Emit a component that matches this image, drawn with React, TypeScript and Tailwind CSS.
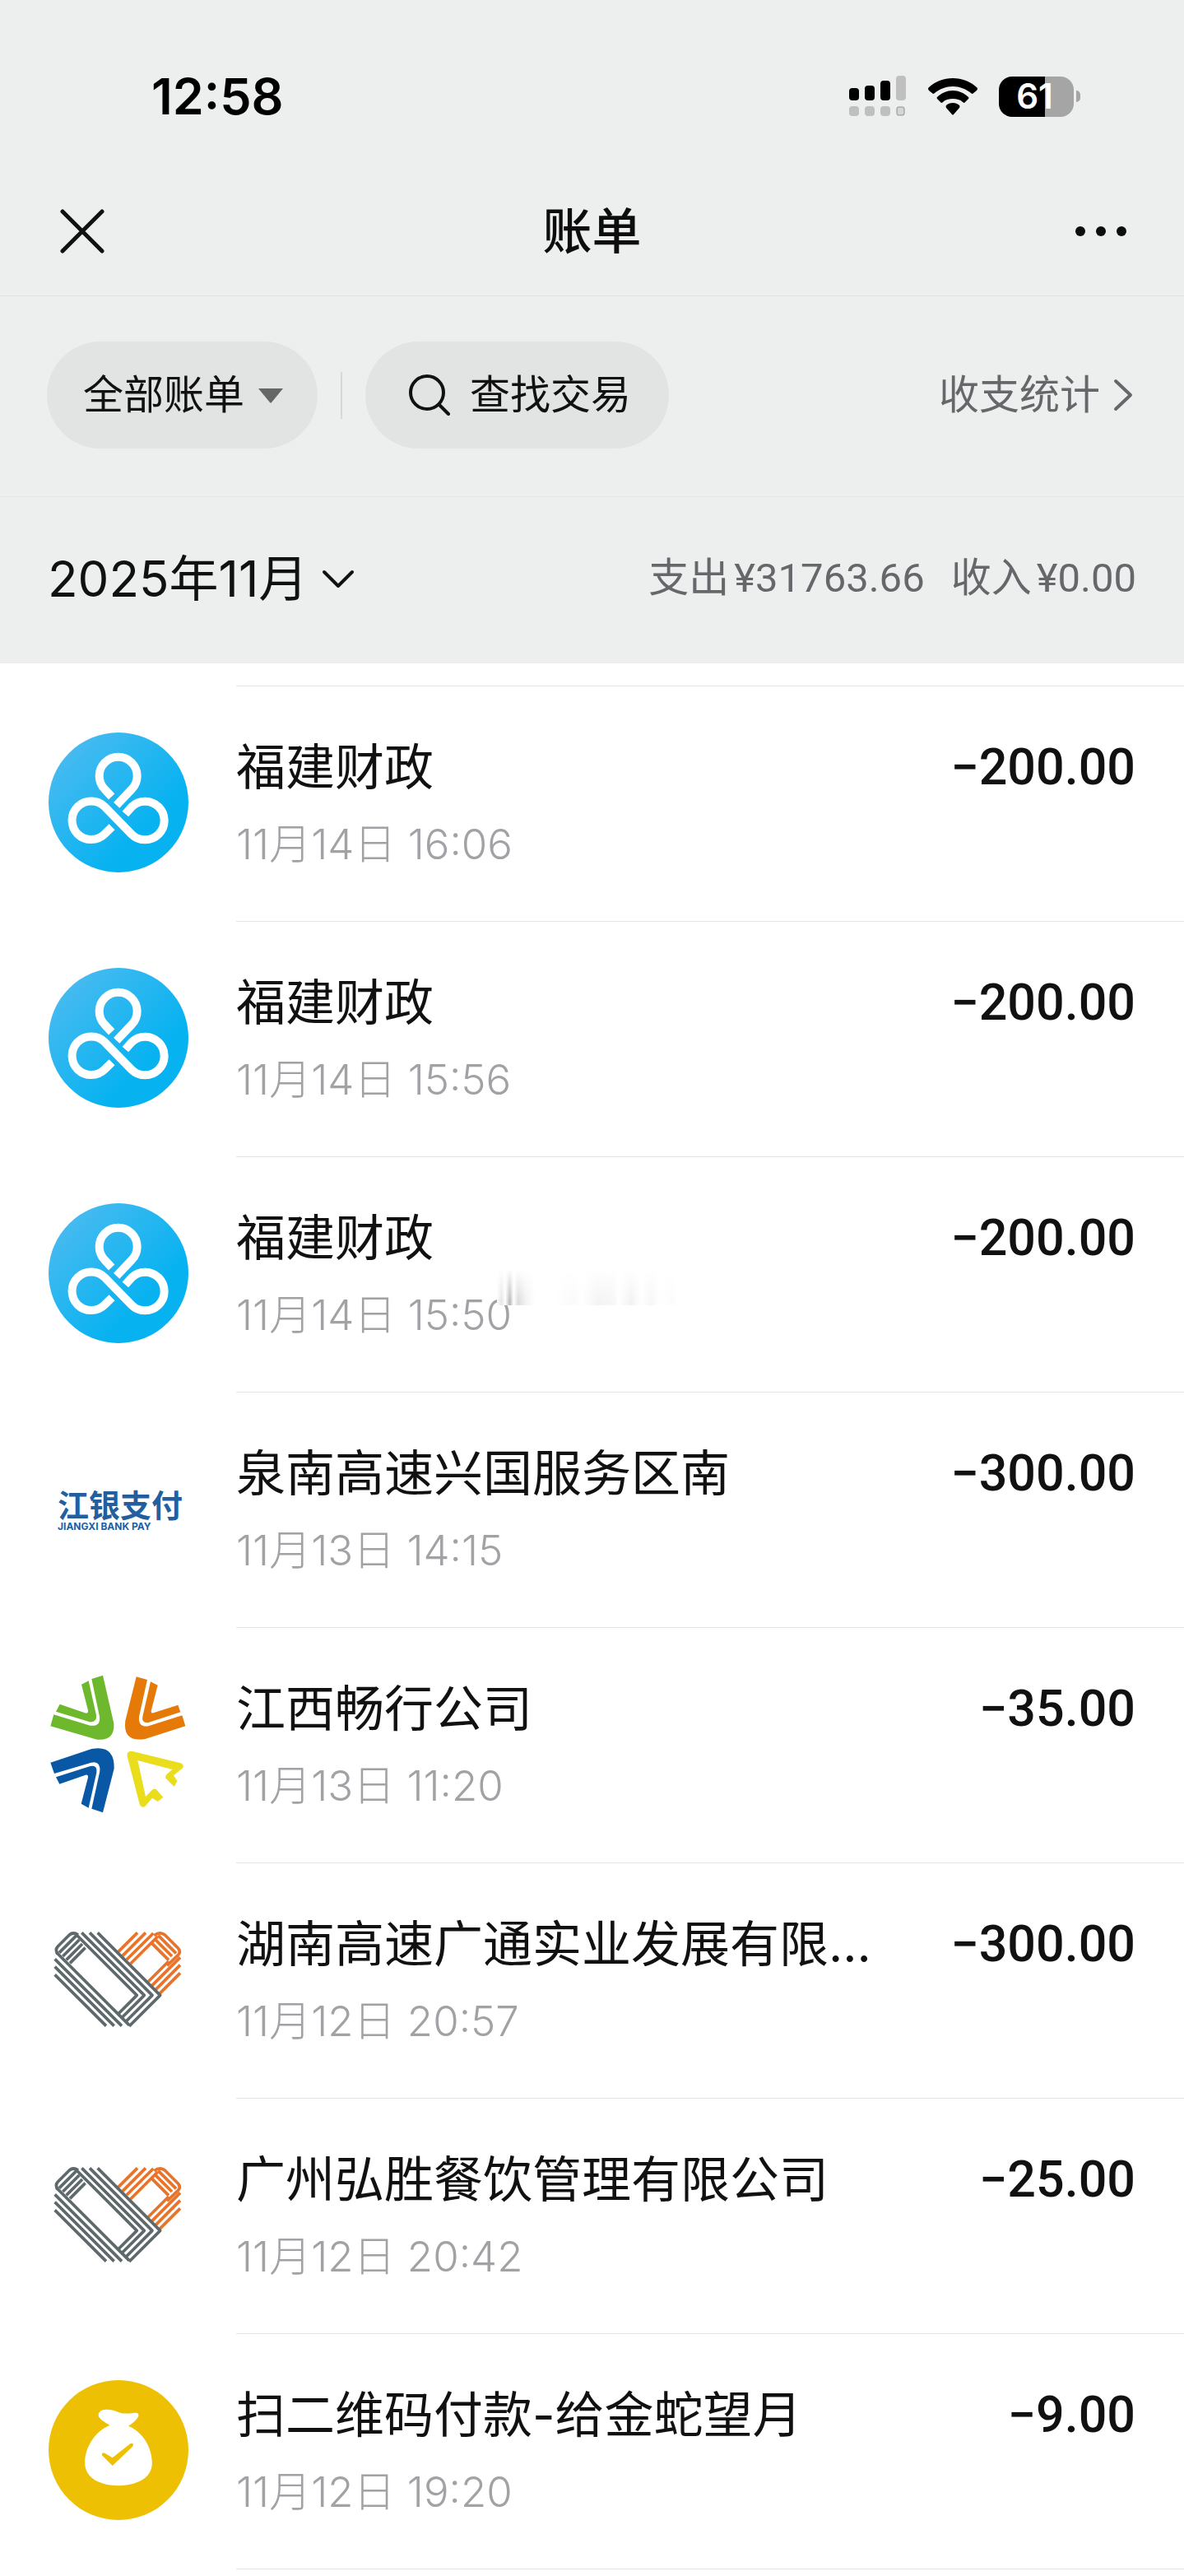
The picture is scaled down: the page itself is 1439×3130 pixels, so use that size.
import { useState } from "react";

type LogoKind = "fujian" | "jiangxi" | "changxing" | "heart" | "bag";

interface Bill {
  id: number;
  logo: LogoKind;
  title: string;
  time: string;
  amount: string;
  smudged?: boolean;
}

const bills: Bill[] = [
  { id: 1, logo: "fujian", title: "福建财政", time: "11月14日 16:06", amount: "−200.00" },
  { id: 2, logo: "fujian", title: "福建财政", time: "11月14日 15:56", amount: "−200.00" },
  { id: 3, logo: "fujian", title: "福建财政", time: "11月14日 15:50", amount: "−200.00", smudged: true },
  { id: 4, logo: "jiangxi", title: "泉南高速兴国服务区南", time: "11月13日 14:15", amount: "−300.00" },
  { id: 5, logo: "changxing", title: "江西畅行公司", time: "11月13日 11:20", amount: "−35.00" },
  { id: 6, logo: "heart", title: "湖南高速广通实业发展有限...", time: "11月12日 20:57", amount: "−300.00" },
  { id: 7, logo: "heart", title: "广州弘胜餐饮管理有限公司", time: "11月12日 20:42", amount: "−25.00" },
  { id: 8, logo: "bag", title: "扫二维码付款-给金蛇望月", time: "11月12日 19:20", amount: "−9.00" },
];

function FujianLogo() {
  return (
    <svg className="size-full" viewBox="58 60 510 510" fill="none">
      <defs>
        <linearGradient id="fujian-bg" x1="0" y1="0" x2="1" y2="1">
          <stop offset="0.1" stopColor="#4abbf0" />
          <stop offset="0.7" stopColor="#06b2f0" />
        </linearGradient>
      </defs>
      <circle cx="313" cy="315" r="255" fill="url(#fujian-bg)" />
      <g stroke="#fff" strokeWidth="30">
        <path d="M289 404L263 430A70 70 0 1 1 263 331L361 431A70 70 0 1 0 361 331L338 357" />
        <path d="M288 294L263 267A69 69 0 1 1 361 267L306 325" />
      </g>
    </svg>
  );
}

function JiangxiLogo() {
  return (
    <div className="flex size-full flex-col items-start justify-center pt-1 pl-[11px] text-[#235f9f]">
      <span className="text-[38px] leading-[40px] font-bold whitespace-nowrap">江银支付</span>
      <span className="text-[12px] leading-[12px] font-bold whitespace-nowrap">JIANGXI BANK PAY</span>
    </div>
  );
}

function ChangxingLogo() {
  return (
    <svg className="size-full" viewBox="58 45 510 510">
      <g fill="#6db82c">
        <path d="M77 193L210 233Q248 238 244 200L215 63L256 50L296 225Q300 290 235 284L65 235Z" />
        <path d="M99 155L195 188Q204 188 202 178L178 83L204 70L232 195Q235 222 208 220L85 182Z" />
      </g>
      <g fill="#e67a08">
        <path d="M378 55L418 66L388 200Q384 240 422 235L545 196L557 235L410 282Q328 295 338 215Z" />
        <path d="M430 73L456 86L432 180Q432 190 440 187L530 158L539 184L422 222Q396 224 401 200Z" />
      </g>
      <g fill="#0958a6">
        <path d="M65 368L215 318Q300 302 297 390L256 550L215 536L245 400Q248 360 213 368L79 408Z" />
        <path d="M85 421L210 381Q237 376 233 404L204 533L177 518L202 422Q203 411 193 413L98 446Z" />
      </g>
      <path
        fill="#e9dd1c"
        d="M362 326L540 370Q554 376 547 388L514 415L527 435L516 456L484 424Q483 418 488 412L509 393L383 360L412 492L436 467Q442 462 450 465L476 494L456 510L436 497L410 528Q397 535 390 520L345 345Q342 325 362 326Z"
      />
    </svg>
  );
}

function HeartLogo() {
  return (
    <svg className="size-full" viewBox="58 5 510 510" fill="none" strokeWidth="11">
      <g stroke="#e8732a" strokeLinejoin="round">
        <path d="M312 160L382 90M328 174L412 90M343 188L440 92M357 203L456 104" />
        <path d="M443 100Q465 84 482 98L530 146Q542 160 530 172L490 210" />
        <path d="M458 100L523 165M444 112L508 176M430 124L496 190" />
        <path d="M538 180L430 288M538 208L446 300M538 237L460 315M496 194L418 272" />
      </g>
      <g stroke="#5e696b" strokeLinejoin="round">
        <path d="M237 90L465 318L352 431" />
        <path d="M208 90L436 318L338 416" />
        <path d="M179 90L407 318L324 401" />
        <path d="M160 98L380 318L312 386" />
        <path d="M86 161L352 427M81 186L325 430M81 214L297 430M81 243L268 430" />
        <path d="M166 98Q148 86 134 98L92 140Q80 153 92 168" />
        <path d="M160 100L97 163M170 116L110 176M181 131L123 189M192 145L136 201" />
      </g>
    </svg>
  );
}

function BagLogo() {
  return (
    <svg className="size-full" viewBox="54 42 512 512" fill="none">
      <circle cx="310" cy="298" r="256" fill="#edc004" />
      <path
        fill="#fff"
        d="M278 208C264 197 232 184 237 165C245 143 287 149 306 158C335 170 360 161 376 162C399 168 365 200 346 210C400 232 433 290 433 345C433 405 370 428 310 428C245 428 187 402 187 345C187 290 222 230 278 208Z"
      />
      <path fill="#edc004" d="M249 316Q249 305 260 309L288 326L354 274Q367 270 363 284L288 355Z" />
    </svg>
  );
}

const logos: Record<LogoKind, () => React.JSX.Element> = {
  fujian: FujianLogo,
  jiangxi: JiangxiLogo,
  changxing: ChangxingLogo,
  heart: HeartLogo,
  bag: BagLogo,
};

function StatusBar() {
  return (
    <div className="flex items-center justify-between pt-[86px] pr-[126px] pb-[55px] pl-[184px]">
      <span className="text-[61px] leading-[62px] font-semibold text-black">12:58</span>
      <div className="flex items-center gap-[26px]">
        {/* Dual SIM signal */}
        <svg className="h-[50px] w-[70px]" viewBox="0 0 70 50">
          <g fill="#000">
            <rect x="0" y="15" width="12" height="15" rx="4" />
            <rect x="19" y="12" width="12" height="18" rx="4" />
            <rect x="38" y="6" width="12" height="24" rx="4" />
          </g>
          <g fill="#bfbfbf">
            <rect x="57" y="0" width="12" height="30" rx="4" />
            <rect x="0" y="37" width="12" height="12" rx="4" />
            <rect x="19" y="37" width="12" height="12" rx="4" />
            <rect x="38" y="37" width="12" height="12" rx="4" />
          </g>
          <rect x="58" y="38" width="9" height="10" rx="2" fill="#d5d5d5" stroke="#8f8f8f" />
        </svg>
        {/* Wifi */}
        <svg className="h-[46px] w-[60px]" viewBox="0 0 60 46">
          <path d="M30 1C41 1 52 5 60 13Q60 15 59 16L54 20Q53 20 52 19C46 14 38 11 30 11S14 14 8 19Q7 20 6 20L1 16Q0 15 0 13C8 5 19 1 30 1Z" />
          <path d="M30 16C37 16 44 19 49 24Q50 25 49 26L44 31Q43 31 42 30C39 27 35 26 30 26S21 27 18 30Q17 31 16 31L11 26Q10 25 11 24C16 19 23 16 30 16Z" />
          <path d="M30 31C33 31 36 32 38 34Q39 35 38 37L31 45Q30 46 29 45L22 37Q21 35 22 34C24 32 27 31 30 31Z" />
        </svg>
        {/* Battery */}
        <div className="flex items-center gap-[3px]">
          <div className="flex h-[49px] w-[91px] items-center justify-center rounded-[16px] bg-[linear-gradient(90deg,#000_61%,#a5a5a5_61%)]">
            <span className="pr-1 text-[42px] leading-[48px] font-semibold text-white">61</span>
          </div>
          <div className="h-[14px] w-[5px] rounded-r-full bg-[#a5a5a5]" />
        </div>
      </div>
    </div>
  );
}

function NavBar() {
  return (
    <header className="grid grid-cols-[1fr_auto_1fr] items-center border-b border-[#dfe0e0] px-[65px] pt-[34px] pb-[34px]">
      <button type="button" aria-label="关闭" className="justify-self-start p-2">
        <svg className="size-[54px]" viewBox="0 0 54 54" stroke="#111" strokeWidth="5" strokeLinecap="round">
          <path d="M3 3L51 51M51 3L3 51" />
        </svg>
      </button>
      <h1 className="text-[60px] leading-[88px] font-medium text-[#0d0d0d]">账单</h1>
      <button type="button" aria-label="更多" className="justify-self-end">
        <svg className="h-[54px] w-[68px]" viewBox="0 0 68 54" fill="#0d0d0d">
          <circle cx="7" cy="27" r="6" />
          <circle cx="32" cy="27" r="6" />
          <circle cx="57" cy="27" r="6" />
        </svg>
      </button>
    </header>
  );
}

function FilterBar() {
  const [keyword, setKeyword] = useState("");

  return (
    <div className="flex items-center border-b border-[#e5e6e6] px-[57px] pt-[55px] pb-[58px]">
      <div className="relative">
        <select
          aria-label="全部账单"
          className="h-[130px] appearance-none rounded-full bg-[#e2e3e3] pr-[88px] pl-[44px] text-[49px] text-[#111]"
        >
          <option>全部账单</option>
        </select>
        <svg className="pointer-events-none absolute top-[57px] right-[42px] h-[18px] w-[30px]" viewBox="0 0 30 18" fill="#666">
          <path d="M0 0H30L16 17Q15 18 14 17Z" />
        </svg>
      </div>
      <div className="mx-7 h-[57px] w-[2px] bg-[#d6d7d7]" />
      <label className="flex h-[130px] items-center rounded-full bg-[#e2e3e3] pr-[44px] pl-[53px]">
        <svg className="mr-6 size-[50px]" viewBox="0 0 50 50" fill="none" stroke="#111" strokeWidth="4" strokeLinecap="round">
          <circle cx="22" cy="22" r="20" />
          <path d="M37 37L48 48" />
        </svg>
        <input
          type="text"
          aria-label="查找交易"
          placeholder="查找交易"
          value={keyword}
          onChange={(e) => setKeyword(e.target.value)}
          className="w-[198px] text-[49px] text-[#111] outline-none placeholder:text-[#111]"
        />
      </label>
      <a href="#stats" className="ml-auto flex items-center gap-4 pr-[5px] text-[49px] leading-[72px] text-[#66676a]">
        收支统计
        <svg className="h-[40px] w-[24px]" viewBox="0 0 24 40" fill="none" stroke="#66676a" strokeWidth="4" strokeLinecap="round" strokeLinejoin="round">
          <path d="M3 3L21 20L3 37" />
        </svg>
      </a>
    </div>
  );
}

function MonthSummary() {
  return (
    <div className="flex items-center justify-between px-[58px] pt-[55px] pb-[59px]">
      <div className="relative">
        <select aria-label="月份" className="appearance-none pr-[56px] text-[60px] leading-[88px] text-[#111]">
          <option>2025年11月</option>
        </select>
        <svg className="pointer-events-none absolute top-[33px] right-0 h-[24px] w-[40px]" viewBox="0 0 40 24" fill="none" stroke="#111" strokeWidth="4" strokeLinecap="round" strokeLinejoin="round">
          <path d="M3 3L20 20L37 3" />
        </svg>
      </div>
      <div className="flex gap-8 font-[Roboto,'Noto_Sans_CJK_SC',sans-serif] text-[49px] leading-[72px] text-[#66676a]">
        <span className="flex gap-[6px]">
          支出<span>¥31763.66</span>
        </span>
        <span className="flex gap-[6px]">
          收入<span>¥0.00</span>
        </span>
      </div>
    </div>
  );
}

function BillRow({ bill }: { bill: Bill }) {
  const Logo = logos[bill.logo];

  return (
    <li className="flex pl-[59px]">
      <div className="mt-[57px] mr-[58px] size-[170px] shrink-0">
        <Logo />
      </div>
      <div className="relative flex min-w-0 flex-1 items-start justify-between border-t border-[#e4e4e4] pt-[54px] pr-[59px] pb-[57px]">
        <div className="min-w-0">
          <h2 className="truncate text-[60px] leading-[88px] text-[#111]">{bill.title}</h2>
          <p className="mt-[14px] text-[51px] leading-[72px] font-light text-[#a0a2a5]">{bill.time}</p>
        </div>
        <span className="ml-4 shrink-0 font-[Roboto,'Noto_Sans_CJK_SC',sans-serif] text-[61px] leading-[88px] font-medium text-[#111]">
          {bill.amount}
        </span>
        {bill.smudged && (
          <div
            aria-hidden="true"
            className="pointer-events-none absolute top-[136px] left-[317px] flex h-[44px] [mask-image:linear-gradient(180deg,transparent,#000_90%)]"
          >
            <div className="w-[46px] bg-[linear-gradient(90deg,#fff,#e6e6e6_12%,#fff_22%,#b8b8b8_34%,#fff_44%,#dcdcdc_56%,#f2f2f2_75%,#fff)]" />
            <div className="ml-6 w-[150px] bg-[linear-gradient(90deg,#fff,#fafafa_15%,#fff_22%,#f4f4f4_35%,#f7f7f7_48%,#fff_52%,#f2f2f2_62%,#fff_70%,#f7f7f7_78%,#fff_85%,#fcfcfc_95%,#fff)]" />
          </div>
        )}
      </div>
    </li>
  );
}

export default function App() {
  return (
    <div className="bg-white font-[Inter,'Noto_Sans_CJK_SC',sans-serif]">
      <div className="bg-[#edefef]">
        <StatusBar />
        <NavBar />
        <FilterBar />
        <MonthSummary />
      </div>
      <ul className="pt-[27px]">
        {bills.map((bill) => (
          <BillRow key={bill.id} bill={bill} />
        ))}
      </ul>
      <div className="ml-[287px] border-t border-[#e4e4e4] pb-1" />
    </div>
  );
}
